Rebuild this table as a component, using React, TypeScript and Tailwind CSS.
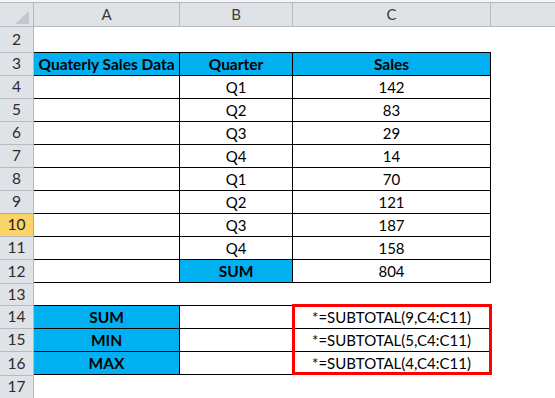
import React from "react";

type CellSpec = {
  text?: string;
  bold?: boolean;
  blue?: boolean;
  boxed?: boolean;
};

type RowSpec = {
  num: number;
  h: string;
  cells: [CellSpec, CellSpec, CellSpec];
  bottom?: boolean;
  selected?: boolean;
};

const colW = ["w-[146px]", "w-[113px]", "w-[198px]"];

const quarters = [
  ["Q1", "142"],
  ["Q2", "83"],
  ["Q3", "29"],
  ["Q4", "14"],
  ["Q1", "70"],
  ["Q2", "121"],
  ["Q3", "187"],
  ["Q4", "158"],
];

const rows: RowSpec[] = [
  {
    num: 3,
    h: "h-[23px]",
    cells: [
      { text: "Quaterly Sales Data", bold: true, blue: true, boxed: true },
      { text: "Quarter", bold: true, blue: true, boxed: true },
      { text: "Sales", bold: true, blue: true, boxed: true },
    ],
  },
  ...quarters.map(([q, v], i) => ({
    num: 4 + i,
    h: "h-[23px]",
    selected: 4 + i === 10,
    cells: [{ boxed: true }, { text: q, boxed: true }, { text: v, boxed: true }] as [CellSpec, CellSpec, CellSpec],
  })),
  {
    num: 12,
    h: "h-[24px]",
    bottom: true,
    cells: [{ boxed: true }, { text: "SUM", bold: true, blue: true, boxed: true }, { text: "804", boxed: true }],
  },
];

const subtotals: RowSpec[] = [
  { num: 14, label: "SUM", code: 9 },
  { num: 15, label: "MIN", code: 5 },
  { num: 16, label: "MAX", code: 4 },
].map((r) => ({
  num: r.num,
  h: r.num === 16 ? "h-[24px]" : "h-[23px]",
  bottom: r.num === 16,
  cells: [
    { text: r.label, bold: true, blue: true, boxed: true },
    { boxed: true },
    { text: `*=SUBTOTAL(${r.code},C4:C11)`, boxed: true },
  ],
}));

const RowHead = ({ num, h, top, selected }: { num: number; h: string; top?: boolean; selected?: boolean }) => (
  <div
    className={`w-[34px] ${h} shrink-0 flex items-center justify-center border-r text-[15.5px] ${
      top ? "border-t" : ""
    } ${
      selected
        ? "bg-[#fbd468] border-[#e2a23a] text-[#222]"
        : "bg-[#dfe2e7] border-[#b6bac0] text-[#2c2c2c]"
    }`}
  >
    {num}
  </div>
);

const Cell = ({ spec, w, bottom }: { spec: CellSpec; w: string; bottom?: boolean }) => (
  <div
    className={`${w} shrink-0 flex items-end justify-center pb-[1px] leading-[19px] text-black ${
      spec.boxed ? "border-t border-r border-black" : ""
    } ${spec.boxed && bottom ? "border-b" : ""} ${spec.blue ? "bg-[#00b0f0]" : "bg-white"} ${
      spec.bold ? "font-bold text-[15.5px]" : "text-[15px]"
    }`}
  >
    {spec.text}
  </div>
);

const SheetRow = ({ row }: { row: RowSpec }) => (
  <div className={`flex ${row.h}`}>
    <RowHead num={row.num} h={row.h} top selected={row.selected} />
    {row.cells.map((c, i) => (
      <Cell key={i} spec={c} w={colW[i]} bottom={row.bottom} />
    ))}
    <div className="flex-1" />
  </div>
);

const EmptyRow = ({ num, h, top }: { num: number; h: string; top?: boolean }) => (
  <div className={`flex ${h}`}>
    <RowHead num={num} h={h} top={top} />
    <div className="flex-1" />
  </div>
);

export default function App() {
  return (
    <div className="w-[555px] h-[398px] overflow-hidden bg-white font-['Lato','Liberation_Sans',sans-serif] select-none">
      <div className="h-[2px] bg-[#f4f5f7]" />
      {/* column headers */}
      <div className="flex h-[25px] bg-[#dfe2e7] border-y border-[#b6bac0] text-[15px] text-[#3a3a3a]">
        <div className="w-[34px] shrink-0 border-r border-[#b6bac0] relative">
          <svg className="absolute left-[15px] top-[8px]" width="14" height="13" viewBox="0 0 14 13">
            <polygon points="0,13 14,13 14,0" fill="#c3c7cd" />
          </svg>
        </div>
        <div className="w-[146px] shrink-0 border-r border-[#b6bac0] flex items-center justify-center">A</div>
        <div className="w-[113px] shrink-0 border-r border-[#b6bac0] flex items-center justify-center">B</div>
        <div className="w-[198px] shrink-0 border-r border-[#b6bac0] flex items-center justify-center">C</div>
        <div className="flex-1" />
      </div>

      <EmptyRow num={2} h="h-[25px]" />
      {rows.map((r) => (
        <SheetRow key={r.num} row={r} />
      ))}
      <EmptyRow num={13} h="h-[22px]" top />
      <div className="relative">
        {subtotals.map((r) => (
          <SheetRow key={r.num} row={r} />
        ))}
        <div className="absolute left-[292px] top-[-1px] w-[200px] h-[71px] border-[3px] border-[#ff0000] pointer-events-none" />
      </div>
      <EmptyRow num={17} h="h-[23px]" top />
    </div>
  );
}
